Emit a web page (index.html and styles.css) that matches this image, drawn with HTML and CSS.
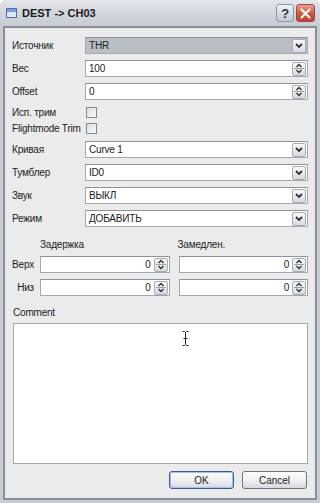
FILE: index.html
```html
<!DOCTYPE html>
<html lang="ru">
<head>
    <meta charset="UTF-8">
    <meta name="viewport" content="width=device-width, initial-scale=1.0">
    <title>DEST -> CH03</title>
    <link rel="stylesheet" href="styles.css">
</head>
<body>
    <div class="window">
        <div class="titlebar">
            <span class="app-icon"></span>
            <span class="title">DEST -&gt; CH03</span>
            <div class="caption-buttons">
                <span class="cap-btn help">?</span>
                <span class="cap-btn close">
                    <svg width="11" height="11" viewBox="0 0 11 11"><path d="M1.5 1.5 L9.5 9.5 M9.5 1.5 L1.5 9.5" stroke="#fff" stroke-width="2.2" stroke-linecap="round"/></svg>
                </span>
            </div>
        </div>
        <div class="client">
            <div class="row">
                <span class="label">Источник</span>
                <div class="field combo selected">
                    <span class="value">THR</span>
                    <span class="side-btn"><svg width="12" height="13" viewBox="0 0 12 13"><path d="M3 5 L6 8 L9 5" fill="none" stroke="#333" stroke-width="1.8"/></svg></span>
                </div>
            </div>
            <div class="row">
                <span class="label">Вес</span>
                <div class="field">
                    <span class="value">100</span>
                    <span class="side-btn spin"><svg width="12" height="13" viewBox="0 0 12 13"><path d="M3.5 5 L6 2.5 L8.5 5 M3.5 8 L6 10.5 L8.5 8" fill="none" stroke="#333" stroke-width="1.4"/><path d="M1 6.5 H11" stroke="#9aa0a8" stroke-width="1"/></svg></span>
                </div>
            </div>
            <div class="row">
                <span class="label">Offset</span>
                <div class="field">
                    <span class="value">0</span>
                    <span class="side-btn spin"><svg width="12" height="13" viewBox="0 0 12 13"><path d="M3.5 5 L6 2.5 L8.5 5 M3.5 8 L6 10.5 L8.5 8" fill="none" stroke="#333" stroke-width="1.4"/><path d="M1 6.5 H11" stroke="#9aa0a8" stroke-width="1"/></svg></span>
                </div>
            </div>
            <div class="row check-row first">
                <span class="label">Исп. трим</span>
                <span class="checkbox"></span>
            </div>
            <div class="row check-row">
                <span class="label">Flightmode Trim</span>
                <span class="checkbox"></span>
            </div>
            <div class="row after-checks">
                <span class="label">Кривая</span>
                <div class="field combo">
                    <span class="value">Curve 1</span>
                    <span class="side-btn"><svg width="12" height="13" viewBox="0 0 12 13"><path d="M3 5 L6 8 L9 5" fill="none" stroke="#333" stroke-width="1.8"/></svg></span>
                </div>
            </div>
            <div class="row">
                <span class="label">Тумблер</span>
                <div class="field combo">
                    <span class="value">ID0</span>
                    <span class="side-btn"><svg width="12" height="13" viewBox="0 0 12 13"><path d="M3 5 L6 8 L9 5" fill="none" stroke="#333" stroke-width="1.8"/></svg></span>
                </div>
            </div>
            <div class="row">
                <span class="label">Звук</span>
                <div class="field combo">
                    <span class="value">ВЫКЛ</span>
                    <span class="side-btn"><svg width="12" height="13" viewBox="0 0 12 13"><path d="M3 5 L6 8 L9 5" fill="none" stroke="#333" stroke-width="1.8"/></svg></span>
                </div>
            </div>
            <div class="row">
                <span class="label">Режим</span>
                <div class="field combo">
                    <span class="value">ДОБАВИТЬ</span>
                    <span class="side-btn"><svg width="12" height="13" viewBox="0 0 12 13"><path d="M3 5 L6 8 L9 5" fill="none" stroke="#333" stroke-width="1.8"/></svg></span>
                </div>
            </div>

            <div class="delay-head">
                <span class="delay-label"></span>
                <span class="col-head">Задержка</span>
                <span class="col-head">Замедлен.</span>
            </div>
            <div class="delay-row">
                <span class="delay-label">Верх</span>
                <div class="field num">
                    <span class="value">0</span>
                    <span class="side-btn spin"><svg width="12" height="13" viewBox="0 0 12 13"><path d="M3.5 5 L6 2.5 L8.5 5 M3.5 8 L6 10.5 L8.5 8" fill="none" stroke="#333" stroke-width="1.4"/><path d="M1 6.5 H11" stroke="#9aa0a8" stroke-width="1"/></svg></span>
                </div>
                <div class="field num">
                    <span class="value">0</span>
                    <span class="side-btn spin"><svg width="12" height="13" viewBox="0 0 12 13"><path d="M3.5 5 L6 2.5 L8.5 5 M3.5 8 L6 10.5 L8.5 8" fill="none" stroke="#333" stroke-width="1.4"/><path d="M1 6.5 H11" stroke="#9aa0a8" stroke-width="1"/></svg></span>
                </div>
            </div>
            <div class="delay-row">
                <span class="delay-label">Низ</span>
                <div class="field num">
                    <span class="value">0</span>
                    <span class="side-btn spin"><svg width="12" height="13" viewBox="0 0 12 13"><path d="M3.5 5 L6 2.5 L8.5 5 M3.5 8 L6 10.5 L8.5 8" fill="none" stroke="#333" stroke-width="1.4"/><path d="M1 6.5 H11" stroke="#9aa0a8" stroke-width="1"/></svg></span>
                </div>
                <div class="field num">
                    <span class="value">0</span>
                    <span class="side-btn spin"><svg width="12" height="13" viewBox="0 0 12 13"><path d="M3.5 5 L6 2.5 L8.5 5 M3.5 8 L6 10.5 L8.5 8" fill="none" stroke="#333" stroke-width="1.4"/><path d="M1 6.5 H11" stroke="#9aa0a8" stroke-width="1"/></svg></span>
                </div>
            </div>

            <div class="comment-label">Comment</div>
            <div class="comment">
                <svg class="ibeam" width="7" height="15" viewBox="0 0 7 15"><path d="M0.5 0.5 H2.5 L3.5 1.5 L4.5 0.5 H6.5 M3.5 1.5 V13.5 M0.5 14.5 H2.5 L3.5 13.5 L4.5 14.5 H6.5 M1.5 7.5 H5.5" fill="none" stroke="#222" stroke-width="1"/></svg>
            </div>

            <div class="buttons">
                <button class="btn default">OK</button>
                <button class="btn">Cancel</button>
            </div>
        </div>
    </div>
</body>
</html>
```

FILE: styles.css
```css
* {
    margin: 0;
    padding: 0;
    box-sizing: border-box;
}
body {
    font-family: 'Liberation Sans', Arial, sans-serif;
    font-size: 10px;
    letter-spacing: -0.2px;
    color: #222;
    background: #fff;
}
.window {
    width: 320px;
    height: 503px;
    display: flex;
    flex-direction: column;
    background: #c9cdd4;
    border-radius: 6px 6px 0 0;
}
.titlebar {
    height: 26px;
    display: flex;
    align-items: center;
    padding: 0 5px 0 6px;
    border-radius: 6px 6px 0 0;
    background: linear-gradient(#e3e6eb, #cfd4dc 60%, #c7ccd5);
}
.app-icon {
    width: 11px;
    height: 10px;
    border: 1px solid #4f6fa8;
    background: linear-gradient(#7a9fe0 0 3px, #dfe8f6 3px);
    margin-right: 5px;
}
.title {
    font-size: 11px;
    font-weight: bold;
    letter-spacing: 0;
    color: #1a1a1a;
    flex: 1;
}
.caption-buttons {
    display: flex;
    gap: 2px;
}
.cap-btn {
    width: 18px;
    height: 18px;
    border-radius: 3px;
    display: flex;
    align-items: center;
    justify-content: center;
}
.cap-btn.help {
    border: 1px solid #8c96a8;
    background: linear-gradient(#f1f3f7, #bfc7d6);
    color: #333;
    font-size: 13px;
    font-weight: bold;
}
.cap-btn.close {
    width: 19px;
    border: 1px solid #9a4a40;
    background: linear-gradient(#ec9c8b, #d2533e 55%, #c4402c);
}
.client {
    flex: 1;
    margin: 0 3px 3px 3px;
    border: 2px solid #8c8f98;
    background: #ebebeb;
    padding: 9px 7px 0 7px;
    display: flex;
    flex-direction: column;
}
.row {
    display: flex;
    align-items: center;
    height: 17px;
    margin-bottom: 6px;
}
.row .label {
    width: 73px;
    flex-shrink: 0;
}
.field {
    flex: 1;
    height: 17px;
    display: flex;
    align-items: center;
    background: #fff;
    border: 1px solid #a3a8b0;
    border-top-color: #8d939c;
    padding: 0 1px 0 3px;
}
.field .value {
    flex: 1;
}
.combo.selected {
    background: #b9bdc4;
}
.side-btn {
    width: 14px;
    height: 14px;
    display: flex;
    align-items: center;
    justify-content: center;
    border: 1px solid #a7adb6;
    border-radius: 2px;
    background: linear-gradient(#f7f8fa, #d6dae0);
}
.check-row {
    height: 16px;
    margin-bottom: 0;
}
.check-row.first {
    margin-top: -2px;
}
.checkbox {
    width: 11px;
    height: 11px;
    border: 1px solid #7f8a9c;
    background: linear-gradient(135deg, #dcdee2, #f8f8f8);
    margin-left: 1px;
}
.after-checks {
    margin-top: 5px;
}
.delay-head,
.delay-row {
    display: flex;
    align-items: center;
    gap: 9px;
}
.delay-head {
    height: 14px;
    margin-top: 4px;
}
.delay-row {
    height: 17px;
    margin-top: 5px;
}
.delay-row + .delay-row {
    margin-top: 6px;
}
.delay-label {
    width: 22px;
    text-align: right;
    margin-right: -3px;
    flex-shrink: 0;
}
.col-head {
    flex: 1;
}
.col-head + .col-head {
    margin-left: -2px;
}
.field.num .value {
    text-align: right;
    padding-right: 3px;
}
.comment-label {
    margin-top: 11px;
    padding-left: 1px;
    height: 12px;
}
.comment {
    position: relative;
    height: 141px;
    margin: 4px 0 0 1px;
    background: #fff;
    border: 1px solid #a3a8b0;
}
.ibeam {
    position: absolute;
    left: 168px;
    top: 7px;
}
.buttons {
    display: flex;
    justify-content: flex-end;
    gap: 8px;
    margin-top: 7px;
    padding-right: 1px;
}
.btn {
    font-family: inherit;
    font-size: 10px;
    color: #222;
    height: 18px;
    width: 65px;
    border: 1px solid #6f747e;
    border-radius: 3px;
    background: linear-gradient(#fdfdfd, #ecedf0 60%, #d6d8de);
}
.btn.default {
    border-color: #3c5a9a;
    box-shadow: inset 0 0 0 1px #a9c0ea;
}
```
